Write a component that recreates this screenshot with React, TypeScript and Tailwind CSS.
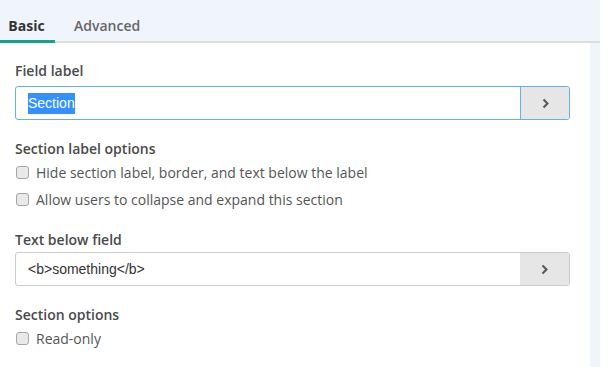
import React from 'react';

const Chevron = () => (
  <svg width="9" height="11" viewBox="0 0 9 11" fill="none">
    <path d="M2.5 1.5 L6.5 5.5 L2.5 9.5" stroke="#555" strokeWidth="2" />
  </svg>
);

const Checkbox = ({ label }: { label: string }) => (
  <label className="flex items-center gap-[7px] h-[27px]">
    <span className="w-[13px] h-[13px] ml-[1px] rounded-[3px] border border-[#a6a6a6] bg-[#e9e9e9]" />
    <span className="text-[14px] text-[#555]">{label}</span>
  </label>
);

const InputGroup = ({ value, focused, selected }: { value: string; focused?: boolean; selected?: boolean }) => (
  <div
    className={`flex h-[34px] rounded-[3px] border ${
      focused ? 'border-[#66afe9]' : 'border-[#ccc]'
    }`}
  >
    <div className="flex-1 flex items-center pl-[12px] font-['Liberation_Sans',Arial,sans-serif] text-[14px] text-[#333]">
      {selected ? <span className="bg-[#3390ff] text-white">{value}</span> : value}
    </div>
    <div
      className={`w-[49px] flex items-center justify-center bg-[#e6e6e6] rounded-r-[2px] ${
        focused ? 'border-l border-[#66afe9]' : ''
      }`}
    >
      <Chevron />
    </div>
  </div>
);

export default function App() {
  return (
    <div className="w-[610px] h-[367px] bg-white font-['Open_Sans',sans-serif]">
      <div className="w-[600px] h-full bg-[#f0f5fd] flex flex-col">
        <div className="flex h-[43px] pt-[16px] border-b-[2px] border-[#ddd] text-[14px] leading-[20px]">
          <div className="w-[55px] text-center border-b-[3px] border-[#13a589] -mb-[2px] font-bold text-[#333] pr-[2px]">
            Basic
          </div>
          <div className="ml-[19px] font-semibold text-[#666]">Advanced</div>
        </div>
        <div className="w-[590px] flex-1 bg-white pl-[15px] pr-[20px] pt-[18px]">
          <div className="text-[14px] font-semibold text-[#4a4a4a] leading-[20px]">Field label</div>
          <div className="mt-[5px]">
            <InputGroup value="Section" focused selected />
          </div>
          <div className="mt-[19px] text-[14px] font-semibold text-[#4a4a4a] leading-[20px]">Section label options</div>
          <Checkbox label="Hide section label, border, and text below the label" />
          <Checkbox label="Allow users to collapse and expand this section" />
          <div className="mt-[17px] text-[14px] font-semibold text-[#4a4a4a] leading-[20px]">Text below field</div>
          <div className="mt-[2px]">
            <InputGroup value="<b>something</b>" />
          </div>
          <div className="mt-[19px] text-[14px] font-semibold text-[#4a4a4a] leading-[20px]">Section options</div>
          <Checkbox label="Read-only" />
        </div>
      </div>
    </div>
  );
}
